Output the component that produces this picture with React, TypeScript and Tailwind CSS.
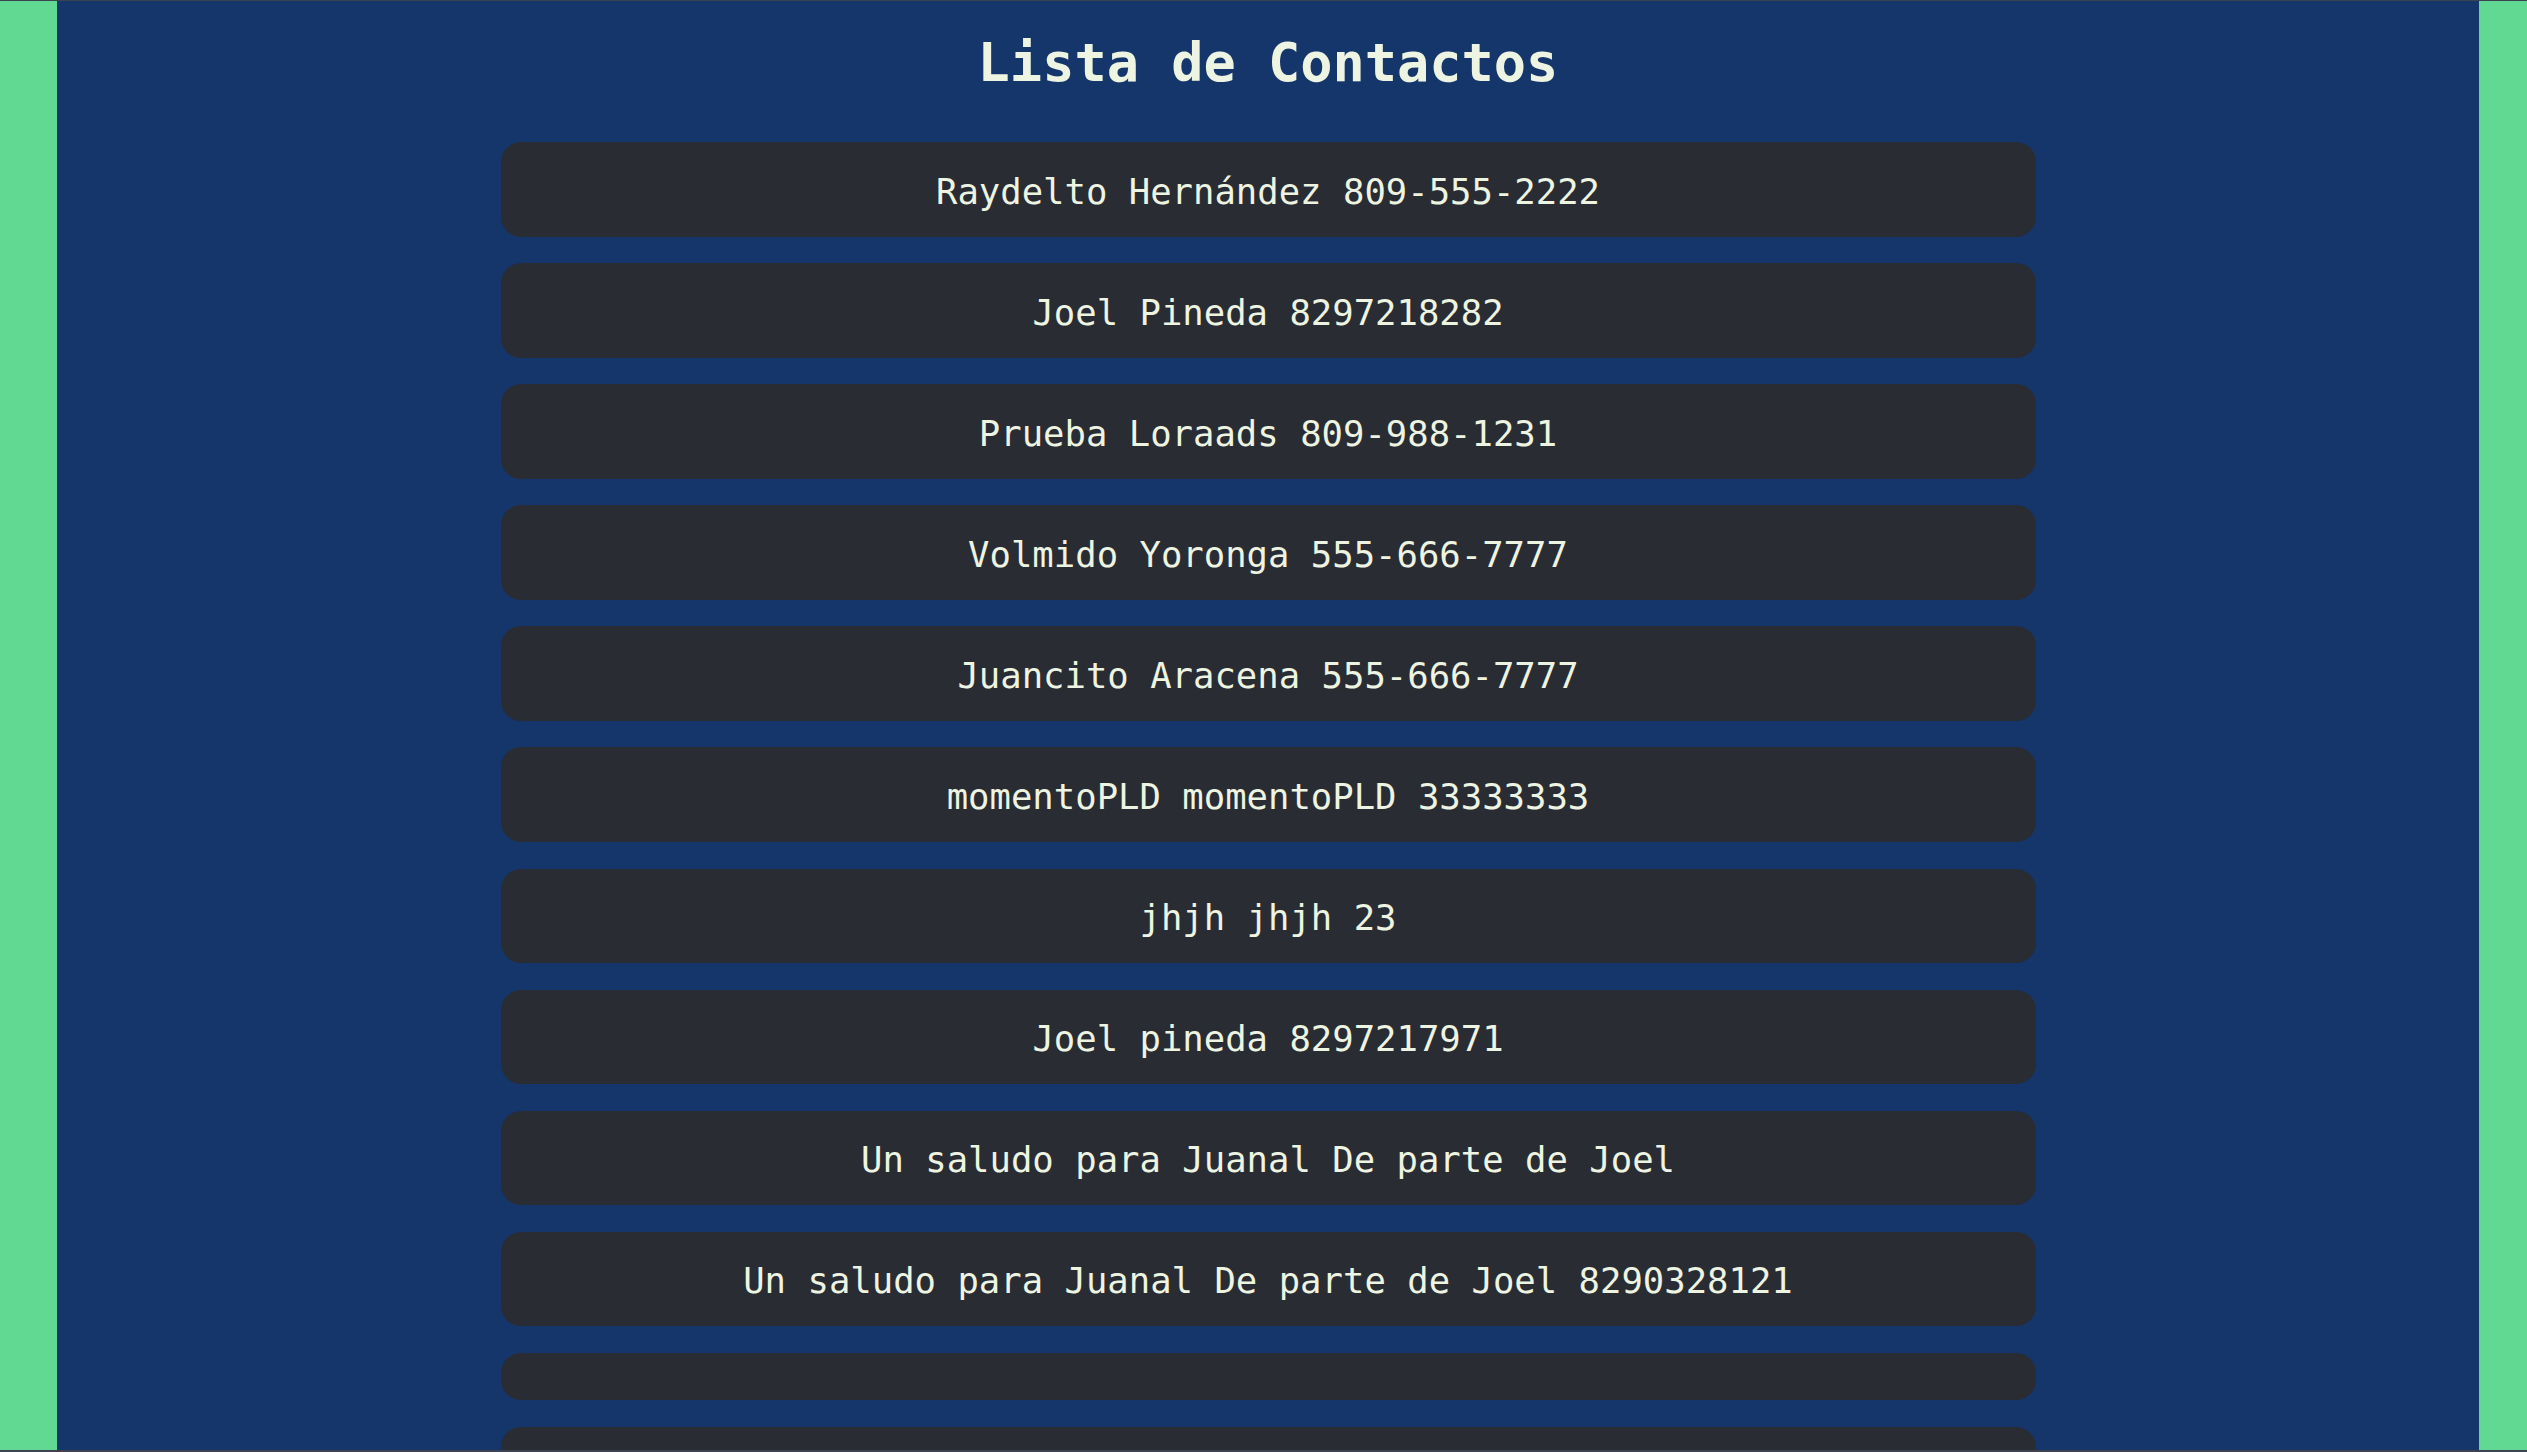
const contactos = [
  "Raydelto Hernández 809-555-2222",
  "Joel Pineda 8297218282",
  "Prueba Loraads 809-988-1231",
  "Volmido Yoronga 555-666-7777",
  "Juancito Aracena 555-666-7777",
  "momentoPLD momentoPLD 33333333",
  "jhjh jhjh 23",
  "Joel pineda 8297217971",
  "Un saludo para Juanal De parte de Joel",
  "Un saludo para Juanal De parte de Joel 8290328121",
  "",
  "",
];

export default function App() {
  return (
    <div className="h-screen overflow-hidden border-t border-b-2 border-[#3c4250] flex bg-[#62d993] font-['DejaVu_Sans_Mono',monospace]">
      <div className="w-[57px] shrink-0" />
      <main className="flex-1 bg-[#15366b] text-[#edf4e1] flex flex-col items-center">
        <h1 className="mt-[30px] text-[53.6px] leading-[64px] font-bold">Lista de Contactos</h1>

        <ul className="mt-[47px] w-[1535px] flex flex-col gap-[26.6px]">
          {contactos.map((c, i) => (
            <li
              key={i}
              className="bg-[#292c33] rounded-[20px] pt-[25.5px] pb-[21.5px] text-center text-[35.6px] leading-[47.5px]"
            >
              {c}
            </li>
          ))}
        </ul>
      </main>
      <div className="w-[48px] shrink-0" />
    </div>
  );
}
